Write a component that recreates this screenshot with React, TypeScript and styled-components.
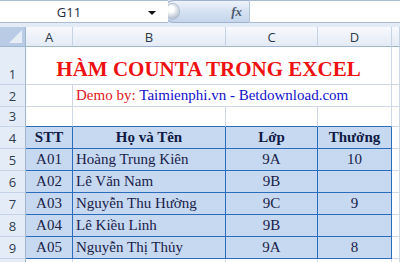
import React from "react";
import styled, { createGlobalStyle, css } from "styled-components";

const GlobalStyle = createGlobalStyle`
  html, body { margin: 0; padding: 0; background: #ffffff; }
  body { width: 400px; height: 262px; overflow: hidden; }
`;

const Window = styled.div`
  width: 400px;
  height: 262px;
  overflow: hidden;
  background: #dfe8f5;
  font-family: "Open Sans", "Noto Sans", sans-serif;
`;

const TopBar = styled.div`
  display: flex;
  align-items: stretch;
  height: 23px;
  background: #dfe8f5;
`;

const NameBox = styled.div`
  position: relative;
  display: flex;
  align-items: center;
  justify-content: center;
  width: 168px;
  padding-right: 30px;
  box-sizing: border-box;
  background: #ffffff;
  border-top: 1px solid #a9bcd6;
  border-bottom: 1px solid #a9bcd6;
  font-size: 13px;
  color: #1e2a3a;
`;

const DropArrow = styled.span`
  position: absolute;
  right: 12px;
  top: 10px;
  width: 0;
  height: 0;
  border-left: 4px solid transparent;
  border-right: 4px solid transparent;
  border-top: 4px solid #111111;
`;

const Pill = styled.div`
  display: flex;
  align-items: center;
  justify-content: space-between;
  width: 87px;
  margin-left: -5px;
  padding: 0 7px 0 2px;
  box-sizing: border-box;
  border: 1px solid #9fb3cf;
  border-right-color: #b4c4da;
  border-radius: 11px 0 0 11px;
  background: linear-gradient(#eef3fa, #d3e0f1 55%, #c6d6ec);
`;

const Knob = styled.span`
  width: 13px;
  height: 15px;
  border-radius: 50%;
  background: radial-gradient(circle at 40% 35%, #ffffff 0 22%, #c3ccd8 65%, #97a5b8);
  box-shadow: 0 0 0 1px #aebbd0;
`;

const Fx = styled.span`
  font-family: "Liberation Serif", serif;
  font-style: italic;
  font-weight: bold;
  font-size: 13px;
  color: #4d5b70;
`;

const FormulaInput = styled.div`
  flex: 1;
  background: #ffffff;
  border-top: 1px solid #a9bcd6;
  border-bottom: 1px solid #a9bcd6;
`;

const Gap = styled.div`
  height: 4px;
  background: #e3ebf6;
`;

const Sheet = styled.div`
  display: grid;
  grid-template-columns: 26px 47px 153px 92px 74px 8px;
  grid-template-rows: 20px 38px 22px 20px repeat(6, 22px) 22px;
  background: #ffffff;
`;

const Corner = styled.div`
  position: relative;
  background: #b9cbe5;
  border-right: 1px solid #9eb6ce;
  border-bottom: 1px solid #9eb6ce;
  &::after {
    content: "";
    position: absolute;
    right: 3px;
    bottom: 3px;
    width: 0;
    height: 0;
    border-left: 13px solid transparent;
    border-bottom: 13px solid #e6edf7;
  }
`;

const ColHead = styled.div`
  display: flex;
  align-items: center;
  justify-content: center;
  background: linear-gradient(#f7f9fd, #e4ebf5);
  border-right: 1px solid #c5d3e4;
  border-bottom: 1px solid #9eb6ce;
  font-size: 13px;
  color: #2b3849;
`;

const RowHead = styled.div`
  display: flex;
  align-items: flex-end;
  justify-content: center;
  padding-bottom: 1px;
  box-sizing: border-box;
  background: #e4ecf7;
  border-right: 1px solid #9eb6ce;
  border-bottom: 1px solid #c5d3e4;
  font-size: 13px;
  color: #2f3d50;
`;

type Kind = "plain" | "table" | "head";

const Cell = styled.div<{
  $kind?: Kind;
  $align?: "left" | "center";
  $span?: number;
  $blueBottom?: boolean;
}>`
  display: flex;
  align-items: flex-end;
  justify-content: ${(p) => (p.$align === "left" ? "flex-start" : "center")};
  padding: 0 3px 2px;
  box-sizing: border-box;
  min-width: 0;
  overflow: hidden;
  white-space: nowrap;
  grid-column: ${(p) => (p.$span ? `span ${p.$span}` : "auto")};
  font-family: "Liberation Serif", "Times New Roman", serif;
  font-size: 15px;
  color: #1a2148;
  border-right: 1px solid #d0d7e5;
  border-bottom: 1px solid ${(p) => (p.$blueBottom ? "#2c6cbc" : "#d0d7e5")};
  ${(p) =>
    (p.$kind === "table" || p.$kind === "head") &&
    css`
      background: #c6d9f1;
      border-right: 1px solid #2c6cbc;
      border-bottom: 1px solid #2c6cbc;
    `}
  ${(p) =>
    p.$kind === "head" &&
    css`
      font-weight: bold;
      color: #0f1a44;
    `}
`;

const Title = styled.span`
  font-family: "Liberation Serif", "Times New Roman", serif;
  font-weight: bold;
  font-size: 21px;
  color: #ee1111;
  line-height: 1;
  padding-bottom: 2px;
`;

const Credit = styled.span<{ $tone: "red" | "blue" }>`
  font-family: "Liberation Serif", "Times New Roman", serif;
  font-size: 15px;
  white-space: pre;
  color: ${(p) => (p.$tone === "red" ? "#e0161c" : "#1111cc")};
`;

const columns = ["A", "B", "C", "D", ""];

const students = [
  { stt: "A01", name: "Hoàng Trung Kiên", lop: "9A", thuong: "10" },
  { stt: "A02", name: "Lê Văn Nam", lop: "9B", thuong: "" },
  { stt: "A03", name: "Nguyễn Thu Hường", lop: "9C", thuong: "9" },
  { stt: "A04", name: "Lê Kiều Linh", lop: "9B", thuong: "" },
  { stt: "A05", name: "Nguyễn Thị Thủy", lop: "9A", thuong: "8" },
];

export default function App() {
  return (
    <>
      <GlobalStyle />
      <Window>
        <TopBar>
          <NameBox>
            G11
            <DropArrow />
          </NameBox>
          <Pill>
            <Knob />
            <Fx>fx</Fx>
          </Pill>
          <FormulaInput />
        </TopBar>
        <Gap />
        <Sheet>
          <Corner />
          {columns.map((c, i) => (
            <ColHead key={i}>{c}</ColHead>
          ))}

          <RowHead>1</RowHead>
          <Cell $span={4}>
            <Title>HÀM COUNTA TRONG EXCEL</Title>
          </Cell>
          <Cell />

          <RowHead>2</RowHead>
          <Cell />
          <Cell $span={3} $align="left">
            <Credit $tone="red">Demo by: </Credit>
            <Credit $tone="blue">Taimienphi.vn - Betdownload.com</Credit>
          </Cell>
          <Cell />

          <RowHead>3</RowHead>
          <Cell $blueBottom />
          <Cell $blueBottom />
          <Cell $blueBottom />
          <Cell $blueBottom />
          <Cell />

          <RowHead>4</RowHead>
          <Cell $kind="head">STT</Cell>
          <Cell $kind="head">Họ và Tên</Cell>
          <Cell $kind="head">Lớp</Cell>
          <Cell $kind="head">Thưởng</Cell>
          <Cell />

          {students.map((s, i) => (
            <React.Fragment key={s.stt}>
              <RowHead>{i + 5}</RowHead>
              <Cell $kind="table">{s.stt}</Cell>
              <Cell $kind="table" $align="left">
                {s.name}
              </Cell>
              <Cell $kind="table">{s.lop}</Cell>
              <Cell $kind="table">{s.thuong}</Cell>
              <Cell />
            </React.Fragment>
          ))}

          <RowHead />
          <Cell />
          <Cell />
          <Cell />
          <Cell />
          <Cell />
        </Sheet>
      </Window>
    </>
  );
}
